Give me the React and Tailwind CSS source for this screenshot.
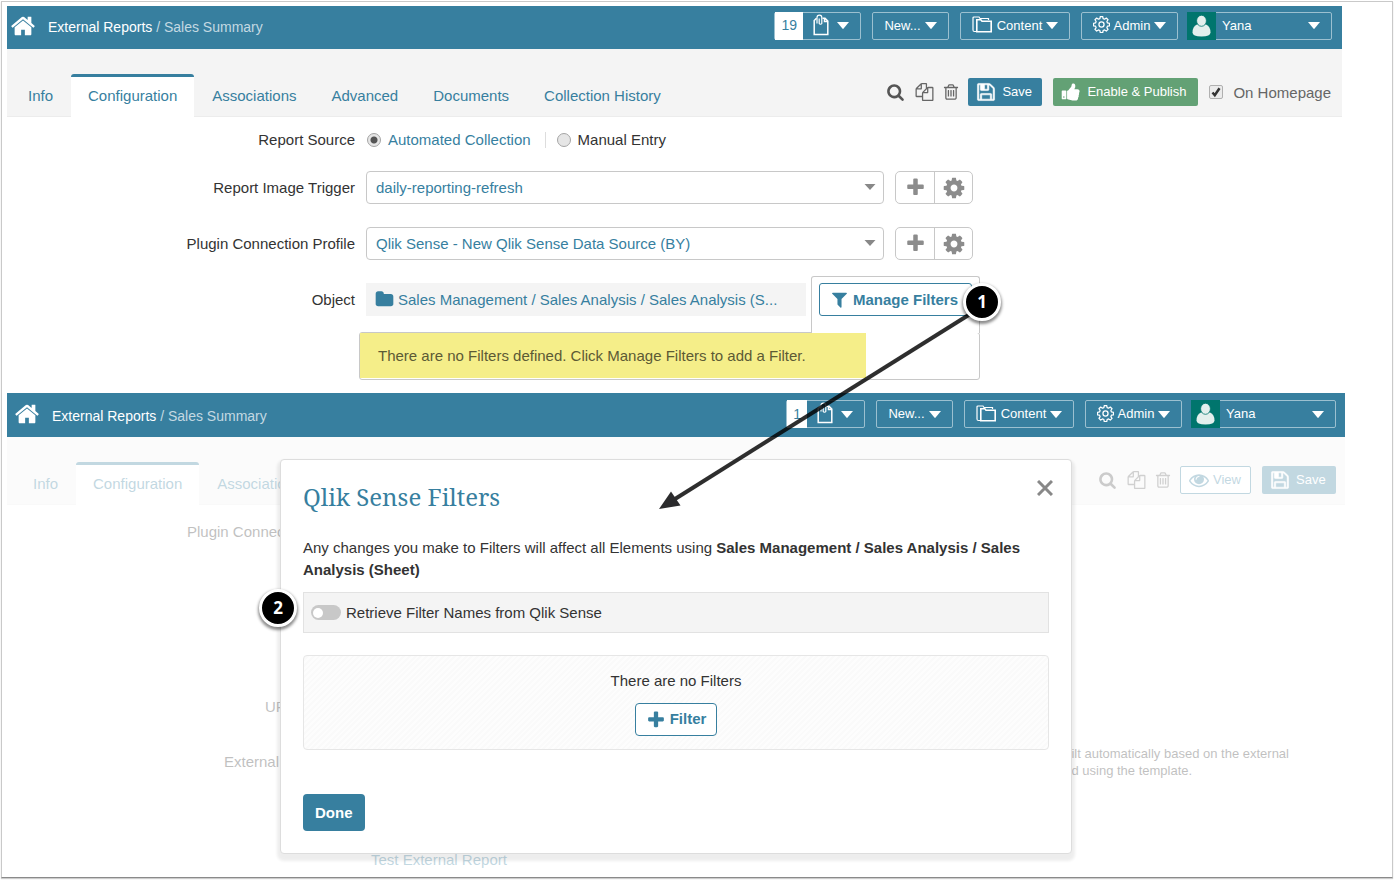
import React, { useState } from 'react'

const PATHS = {
  home: 'M1472 992v480q0 26-19 45t-45 19h-384v-384h-256v384h-384q-26 0-45-19t-19-45v-480q0-1 .5-3t.5-3l575-474 575 474q1 2 1 6zm223-69l-62 74q-8 9-21 11h-3q-13 0-21-7l-692-577-692 577q-12 8-24 7-13-2-21-11l-62-74q-8-10-7-23.5t11-21.5l719-599q32-26 76-26t76 26l244 204v-195q0-14 9-23t23-9h192q14 0 23 9t9 23v408l219 182q10 8 11 21.5t-7 23.5z',
  plus: 'M1600 736v192q0 40-28 68t-68 28h-416v416q0 40-28 68t-68 28h-192q-40 0-68-28t-28-68v-416h-416q-40 0-68-28t-28-68v-192q0-40 28-68t68-28h416v-416q0-40 28-68t68-28h192q40 0 68 28t28 68v416h416q40 0 68 28t28 68z',
  cog: 'M1152 896q0-106-75-181t-181-75-181 75-75 181 75 181 181 75 181-75 75-181zm512-109v222q0 12-8 23t-20 13l-185 28q-19 54-39 91 35 50 107 138 10 12 10 25t-9 23q-27 37-99 108t-94 71q-12 0-26-9l-138-108q-44 23-91 38-16 136-29 186-7 28-36 28h-222q-14 0-24.5-8.5t-11.5-21.5l-28-184q-49-16-90-37l-141 107q-10 9-25 9-14 0-25-11-126-114-165-168-7-10-7-23 0-12 8-23 15-21 51-66.5t54-70.5q-27-50-41-99l-183-27q-13-2-21-12.5t-8-23.5v-222q0-12 8-23t19-13l186-28q14-46 39-92-40-57-107-138-10-12-10-24 0-10 9-23 26-36 98.5-107.5t94.5-71.5q13 0 26 10l138 107q44-23 91-38 16-136 29-186 7-28 36-28h222q14 0 24.5 8.5t11.5 21.5l28 184q49 16 90 37l142-107q9-9 24-9 13 0 25 10 129 119 165 170 7 8 7 22 0 12-8 23-15 21-51 66.5t-54 70.5q26 50 41 98l183 28q13 2 21 12.5t8 23.5z',
  filter: 'M1595 295q17 41-14 70l-493 493v742q0 42-39 59-13 5-25 5-27 0-45-19l-256-256q-19-19-19-45v-486l-493-493q-31-29-14-70 17-39 59-39h1280q42 0 59 39z',
  search: 'M1216 832q0-185-131.5-316.5t-316.5-131.5-316.5 131.5-131.5 316.5 131.5 316.5 316.5 131.5 316.5-131.5 131.5-316.5zm512 832q0 52-38 90t-90 38q-54 0-90-38l-343-342q-179 124-399 124-143 0-273.5-55.5t-225-150-150-225-55.5-273.5 55.5-273.5 150-225 225-150 273.5-55.5 273.5 55.5 225 150 150 225 55.5 273.5q0 220-124 399l343 343q37 37 37 90z',
  save: 'M512 1536h768v-384h-768v384zm896 0h128v-896q0-14-10-38.5t-20-34.5l-281-281q-10-10-34-20t-39-10v416q0 40-28 68t-68 28h-576q-40 0-68-28t-28-68v-416h-128v1280h128v-416q0-40 28-68t68-28h832q40 0 68 28t28 68v416zm-384-928v-320q0-13-9.5-22.5t-22.5-9.5h-192q-13 0-22.5 9.5t-9.5 22.5v320q0 13 9.5 22.5t22.5 9.5h192q13 0 22.5-9.5t9.5-22.5zm640 32v928q0 40-28 68t-68 28h-1344q-40 0-68-28t-28-68v-1344q0-40 28-68t68-28h928q40 0 88 20t76 48l280 280q28 28 48 76t20 88z',
  copy: 'M1696 384q40 0 68 28t28 68v1216q0 40-28 68t-68 28h-960q-40 0-68-28t-28-68v-288h-544q-40 0-68-28t-28-68v-672q0-40 20-88t48-76l408-408q28-28 76-48t88-20h416q40 0 68 28t28 68v328q68-40 128-40h416zm-544 213l-299 299h299v-299zm-640-384l-299 299h299v-299zm196 647l316-316v-416h-384v416q0 40-28 68t-68 28h-416v640h512v-256q0-40 20-88t48-76zm956 804v-1152h-384v416q0 40-28 68t-68 28h-416v640h896z',
  trash: 'M704 736v576q0 14-9 23t-23 9h-64q-14 0-23-9t-9-23v-576q0-14 9-23t23-9h64q14 0 23 9t9 23zm256 0v576q0 14-9 23t-23 9h-64q-14 0-23-9t-9-23v-576q0-14 9-23t23-9h64q14 0 23 9t9 23zm256 0v576q0 14-9 23t-23 9h-64q-14 0-23-9t-9-23v-576q0-14 9-23t23-9h64q14 0 23 9t9 23zm128 724v-948h-896v948q0 22 7 40.5t14.5 27 10.5 8.5h832q3 0 10.5-8.5t14.5-27 7-40.5zm-672-1076h448l-48-117q-7-9-17-11h-317q-10 2-17 11zm928 32v64q0 14-9 23t-23 9h-96v948q0 83-47 143.5t-113 60.5h-832q-66 0-113-58.5t-47-141.5v-952h-96q-14 0-23-9t-9-23v-64q0-14 9-23t23-9h309l70-167q15-37 54-63t79-26h320q40 0 79 26t54 63l70 167h309q14 0 23 9t9 23z',
  folder: 'M1728 608v704q0 92-66 158t-158 66h-1216q-92 0-158-66t-66-158v-960q0-92 66-158t158-66h320q92 0 158 66t66 158v32h672q92 0 158 66t66 158z',
  thumb: 'M320 1344q0-26-19-45t-45-19q-27 0-45.5 19t-18.5 45q0 27 18.5 45.5t45.5 18.5q26 0 45-18.5t19-45.5zm160-512v640q0 26-19 45t-45 19h-288q-26 0-45-19t-19-45v-640q0-26 19-45t45-19h288q26 0 45 19t19 45zm1184 0q0 86-55 149 15 44 15 76 3 76-43 137 17 56 0 117-15 57-54 94 9 112-49 181-64 76-197 78h-129q-66 0-144-15.5t-121.5-29-120.5-39.5q-123-43-158-44-26-1-45-19.5t-19-44.5v-641q0-25 18-43.5t43-20.5q24-2 76-59t101-121q68-87 101-120 18-18 31-48t17.5-48.5 13.5-60.5q7-39 12.5-61t19.5-52 34-50q19-19 45-19 46 0 82.5 10.5t60 26 40 40.5 24 45 12 50 5 45 .5 39q0 38-9.5 76t-19 60-27.5 56q-3 6-10 18t-11 22-8 24h277q78 0 135 57t57 135z',
  eye: 'M1664 960q-152-236-381-353 61 104 61 225 0 185-131.5 316.5t-316.5 131.5-316.5-131.5-131.5-316.5q0-121 61-225-229 117-381 353 133 205 333.5 326.5t434.5 121.5 434.5-121.5 333.5-326.5zm-720-384q0-20-14-34t-34-14q-125 0-214.5 89.5t-89.5 214.5q0 20 14 34t34 14 34-14 14-34q0-86 61-147t147-61q20 0 34-14t14-34zm848 384q0 34-20 69-140 230-376.5 368.5t-499.5 138.5-499.5-139-376.5-368q-20-35-20-69t20-69q140-229 376.5-368t499.5-139 499.5 139 376.5 368q20 35 20 69z',
}

const TABS = ['Info', 'Configuration', 'Associations', 'Advanced', 'Documents', 'Collection History']

function Icon({ name, className }){
  return <svg viewBox="0 0 1792 1792" fill="currentColor" className={`shrink-0 ${className}`} aria-hidden="true"><path d={PATHS[name]} /></svg>
}

function Caret(){
  return <svg viewBox="0 0 12 7" fill="currentColor" className="w-3 h-[7px] shrink-0" aria-hidden="true"><path d="M0 0h12L6.600 6.600q-.6.6-1.200 0z" /></svg>
}

function ClipIcon(){
  return (
    <svg viewBox="0 0 16 22" fill="none" stroke="currentColor" className="w-4 h-[22px] mb-0.5 shrink-0" aria-hidden="true">
      <path d="M3.500 4.200L1.200 6.500v14h13.600V7L12 4.200H9.500M11.500 4.200V7.500h3.300" strokeWidth="1.500" />
      <path d="M4 9.500V3.500a2.400 2.400 0 0 1 4.800 0V9.500a1.500 1.500 0 0 1-2.600 0V4.500" strokeWidth="1.200" />
    </svg>
  )
}

function ContentIcon(){
  return (
    <svg viewBox="0 0 21 17" fill="none" stroke="currentColor" className="w-[21px] h-[17px] mb-0.5 shrink-0" aria-hidden="true">
      <path d="M4 15.500H2.500q-1.500 0-1.500-1.500V2q0-1 1-1h5l1 1.500h8.500V4" strokeWidth="1.200" />
      <path d="M4.800 3.800h4l1.200 1.400h9.200v10.500H4.800z" strokeWidth="1.600" />
    </svg>
  )
}

function GearIcon(){
  return (
    <svg viewBox="0 0 24 24" fill="none" stroke="currentColor" strokeWidth="1.800" strokeLinejoin="round" className="w-[17px] h-[17px] mb-0.5 shrink-0" aria-hidden="true">
      <path d="M10.300 1.500h3.400l.6 2.900 2 .8 2.500-1.600 2.400 2.400-1.600 2.500.8 2 2.900.6v3.400l-2.900.6-.8 2 1.600 2.500-2.400 2.400-2.500-1.600-2 .8-.6 2.900h-3.400l-.6-2.900-2-.8-2.500 1.600-2.400-2.400 1.600-2.500-.8-2-2.900-.6v-3.400l2.900-.6.8-2-1.600-2.500 2.400-2.400 2.500 1.600 2-.8z" transform="translate(0 -.7)" />
      <circle cx="12" cy="12" r="3.600" />
    </svg>
  )
}

function UserIcon(){
  return (
    <svg viewBox="0 0 29 28" className="w-[29px] h-7 shrink-0 bg-[#00756d]" aria-hidden="true">
      <path d="M5.500 20.500q0-6 4.500-8h9q4.500 2 4.500 8 0 4-9 4t-9-4z" fill="#e3efed" />
      <ellipse cx="14.500" cy="8.800" rx="4.900" ry="5.500" fill="#e3efed" stroke="#00756d" strokeWidth=".8" />
    </svg>
  )
}

const barButton = 'flex items-center h-7 border border-[#9bc0d0] rounded-xs text-[13px] text-white'

function TopBar({ count, className }){
  return (
    <header className={`flex items-center justify-between bg-[#377f9f] text-white ${className}`}>
      <nav className="flex items-center text-[14px]">
        <a href="#home" aria-label="Home" className="mr-3"><Icon name="home" className="w-[26px] h-[26px]" /></a>
        <a href="#reports" className="mt-1">External Reports</a>
        <span className="mt-1 text-[#c3d9e2] whitespace-pre"> / Sales Summary</span>
      </nav>
      <div className="flex items-center">
        <button className={`${barButton} mr-[11px] pr-[11px]`}>
          <span className="flex items-center h-7 px-1.5 mr-2.5 bg-white text-[#377f9f] text-[14px]">{count}</span>
          <ClipIcon />
          <span className="ml-2"><Caret /></span>
        </button>
        <button className={`${barButton} w-[77px] justify-center gap-1 mr-[11px]`}>New... <Caret /></button>
        <button className={`${barButton} w-[110px] justify-center gap-1 mr-[11px]`}><ContentIcon />Content <Caret /></button>
        <button className={`${barButton} w-[97px] justify-center gap-1 mr-[9px]`}><GearIcon />Admin <Caret /></button>
        <button className={`${barButton} w-[145px] justify-between pr-[11px]`}>
          <span className="flex items-center gap-1.5 -ml-px"><UserIcon />Yana</span>
          <Caret />
        </button>
      </div>
    </header>
  )
}

function TabBar({ tabs, className, children }){
  return (
    <div className={`flex items-end justify-between h-[68px] bg-[#f4f4f4] border-b border-[#ececec] ${className}`}>
      <nav className="flex gap-px -mb-px">
        {tabs.map(t => (
          <a key={t} href="#tab" className={`flex items-center h-[43px] px-[17px] pb-0.5 text-[15px] text-[#377f9f] border-t-[3px] ${t === 'Configuration' ? 'bg-white border-[#377f9f] rounded-t-[3px]' : 'border-transparent'}`}>{t}</a>
        ))}
      </nav>
      <div className="flex items-center self-center mt-[18px]">
        <button aria-label="Search" className="mr-2.5 text-[#555]"><Icon name="search" className="w-[19px] h-[18px]" /></button>
        <button aria-label="Copy" className="mr-2 text-[#666]"><Icon name="copy" className="w-[19px] h-[18px]" /></button>
        <button aria-label="Delete" className="mr-2 text-[#666]"><Icon name="trash" className="w-[18px] h-[18px]" /></button>
        {children}
      </div>
    </div>
  )
}

function SaveButton(){
  return <button className="flex items-center gap-1.5 h-7 w-[74px] pl-2 rounded-xs bg-[#377f9f] text-white text-[13px]"><Icon name="save" className="w-5 h-5 stroke-white stroke-[50px]" />Save</button>
}

function SelectRow({ id, label, value }){
  return (
    <div className="flex items-center">
      <label htmlFor={id} className="w-[348px] mr-[11px] pt-0.5 text-right">{label}</label>
      <div className="relative w-[518px] mr-[11px]">
        <select id={id} defaultValue={value} className="appearance-none w-full h-[33px] pl-[9px] pt-0.5 border border-[#c8c8c8] rounded-[4px] bg-white text-[#377f9f] text-[15px]">
          <option>{value}</option>
        </select>
        <svg viewBox="0 0 12 6" fill="#888" className="absolute right-2 top-[13px] w-3 h-1.5 pointer-events-none" aria-hidden="true"><path d="M.5 0h11L6 6z" /></svg>
      </div>
      <div className="flex h-[33px] w-[78px] border border-[#c8c8c8] rounded-[5px] text-[#8c8c8c]">
        <button aria-label={`Add ${label}`} className="w-[39px] flex items-center justify-center border-r border-[#c8c8c8]"><Icon name="plus" className="w-[21px] h-[21px]" /></button>
        <button aria-label={`Configure ${label}`} className="flex-1 flex items-center justify-center"><Icon name="cog" className="w-6 h-6" /></button>
      </div>
    </div>
  )
}

const radio = 'appearance-none w-3.5 h-3.5 rounded-full border border-[#a5a5a5] bg-[#e6e6e6] checked:bg-[radial-gradient(circle,#555_3px,#e6e6e6_4px)]'

function ConfigPage(){
  const [source, setSource] = useState('auto')
  const [onHome, setOnHome] = useState(true)
  return (
    <section className="mr-[50px]">
      <TopBar count="19" className="h-[43px] pl-[3px] pr-2.5 pb-1" />
      <TabBar tabs={TABS} className="pl-1 pr-[11px]">
        <SaveButton />
        <button className="flex items-center gap-1.5 h-7 w-[145px] pl-2 ml-[11px] rounded-xs bg-[#63a175] text-white text-[13px]"><Icon name="thumb" className="w-5 h-5" />Enable &amp; Publish</button>
        <span className="relative flex ml-[11px] mr-2.5 w-3.5 h-3.5">
          <input id="homepage" type="checkbox" checked={onHome} onChange={e => setOnHome(e.target.checked)} className="peer appearance-none w-3.5 h-3.5 border border-[#b0b0b0] rounded-[2px] bg-[#ebebeb]" />
          <svg viewBox="0 0 14 14" fill="none" stroke="#333" strokeWidth="2.500" className="absolute inset-0 hidden peer-checked:block pointer-events-none"><path d="M3.500 7.500l2.300 2.700 4.700-7" /></svg>
        </span>
        <label htmlFor="homepage" className="pt-1 text-[15px] text-[#666]">On Homepage</label>
      </TabBar>

      <div className="text-[15px] text-[#333] pb-[13px]">
        <div className="flex items-center h-[46px] mb-2">
          <span className="w-[348px] mr-3 text-right">Report Source</span>
          <input id="auto" type="radio" name="source" checked={source === 'auto'} onChange={() => setSource('auto')} className={radio} />
          <label htmlFor="auto" className="ml-[7px] mr-3.5 text-[#377f9f]">Automated Collection</label>
          <span className="w-px h-4 bg-[#ddd] mr-[11px]" />
          <input id="manual" type="radio" name="source" checked={source === 'manual'} onChange={() => setSource('manual')} className={radio} />
          <label htmlFor="manual" className="ml-[7px]">Manual Entry</label>
        </div>
        <div className="flex flex-col gap-[23px]">
          <SelectRow id="trigger" label="Report Image Trigger" value="daily-reporting-refresh" />
          <SelectRow id="profile" label="Plugin Connection Profile" value="Qlik Sense - New Qlik Sense Data Source (BY)" />
        </div>
        <div className="flex items-start mt-4">
          <span className="w-[348px] mr-[11px] mt-[7px] leading-[33px] text-right">Object</span>
          <a href="#object" className="flex items-center w-[440px] h-[33px] mt-[7px] mr-[5px] pl-[9px] bg-[#f4f4f4] text-[#377f9f]">
            <Icon name="folder" className="w-[19px] h-[19px] mr-1" />
            <span className="pt-0.5 whitespace-nowrap">Sales Management / Sales Analysis / Sales Analysis (S...</span>
          </a>
          <div className="relative w-[169px] -mb-px pt-1.5 pb-[17px] px-[7px] bg-white border border-b-0 border-[#c8c8c8] rounded-t-[3px]">
            <button className="flex items-center gap-1 w-full h-[33px] pl-2.5 border border-[#377f9f] rounded-[3px] text-[#377f9f] font-bold"><Icon name="filter" className="w-[19px] h-[19px]" /><span className="pt-0.5">Manage Filters</span></button>
          </div>
        </div>
        <div className="w-[621px] ml-[352px] pb-px border border-[#c8c8c8] rounded-[3px]">
          <p className="w-[506px] h-[45px] pl-[18px] leading-[45px] bg-[#f5ee89] text-[#5c5a35]">There are no Filters defined. Click Manage Filters to add a Filter.</p>
        </div>
      </div>
    </section>
  )
}

function FilterDialog(){
  const [retrieve, setRetrieve] = useState(false)
  return (
    <div role="dialog" aria-labelledby="dlg-title" className="absolute left-[273px] top-[66px] w-[792px] px-[22px] pt-[18px] pb-[22px] bg-white border border-[#ddd] rounded-[4px] shadow-[0_4px_3px_3px_rgba(0,0,0,0.07)] text-[15px] text-[#333]">
      <div className="flex items-start justify-between">
        <h2 id="dlg-title" className="font-['Noto_Serif','DejaVu_Serif',serif] text-[24px] leading-[38px] text-[#377f9f]">Qlik Sense Filters</h2>
        <button aria-label="Close" className="-mr-1.5 p-0.5 text-[#888]">
          <svg viewBox="0 0 16 16" stroke="currentColor" strokeWidth="3" className="w-4 h-4"><path d="M1 1l14 14M15 1L1 15" /></svg>
        </button>
      </div>
      <p className="mt-[21px] leading-[22px]">Any changes you make to Filters will affect all Elements using <b>Sales Management / Sales Analysis / Sales Analysis (Sheet)</b></p>
      <div className="flex items-center h-[41px] mt-[11px] px-[7px] bg-[#f4f4f4] border border-[#e2e2e2]">
        <span className="relative flex mr-[5px]">
          <input id="retrieve" type="checkbox" role="switch" checked={retrieve} onChange={e => setRetrieve(e.target.checked)} className="peer appearance-none w-[30px] h-[15px] rounded-full bg-[#c8c8c8] checked:bg-[#377f9f]" />
          <span className="absolute left-[2px] top-[3px] w-[10px] h-[10px] rounded-full bg-white pointer-events-none peer-checked:left-[18px]" />
        </span>
        <label htmlFor="retrieve" className="pt-0.5">Retrieve Filter Names from Qlik Sense</label>
      </div>
      <div className="flex flex-col items-center mt-[22px] pt-[14px] pb-[13px] border border-[#e6e6e6] rounded-[4px] bg-[repeating-linear-gradient(135deg,#fdfdfd_0_2px,#fafafa_2px_4px)]">
        <p className="leading-[22px] mb-[11px]">There are no Filters</p>
        <button className="flex items-center gap-1 h-[33px] px-2.5 bg-white border border-[#377f9f] rounded-[4px] text-[#377f9f] font-bold"><Icon name="plus" className="w-5 h-5" />Filter</button>
      </div>
      <button className="h-[37px] mt-11 px-3 pt-0.5 bg-[#377f9f] rounded-[4px] text-white font-bold">Done</button>
    </div>
  )
}

function DialogPage(){
  return (
    <section className="relative">
      <div className="mr-[47px]">
        <TopBar count="1" className="h-11 pl-[7px] pr-[9px] pb-0.5" />
        <div className="opacity-30">
          <TabBar tabs={TABS.slice(0, 3)} className="pl-[9px] pr-[9px]">
            <button className="flex items-center gap-1 h-7 w-[71px] pl-2 mr-[11px] border border-[#377f9f] rounded-xs bg-white text-[#377f9f] text-[13px]"><Icon name="eye" className="w-5 h-5" />View</button>
            <SaveButton />
          </TabBar>
        </div>
      </div>
      <div className="h-[372px] pt-4 text-[15px] leading-[22px] text-[#333]">
        <div className="opacity-30">
          <p className="pl-[180px] mb-[153px]">Plugin Connection</p>
          <p className="pl-[258px] mb-[27px]">URL</p>
          <div className="flex items-start h-[104px]">
            <p className="w-[832px] pl-[217px] mt-1.5">External</p>
            <p className="ml-[218px] text-[13px] leading-[17px]">built automatically based on the external<br />and using the template.</p>
          </div>
          <p className="pl-[364px] text-[#377f9f]">Test External Report</p>
        </div>
      </div>
      <FilterDialog />
    </section>
  )
}

function Step({ n, className }){
  return <span className={`absolute flex items-center justify-center w-[38px] h-[38px] rounded-full border-[3px] border-white bg-black text-white font-['Noto_Sans','Open_Sans',sans-serif] text-[17px] font-bold shadow-[0_2px_3px_1px_rgba(0,0,0,0.45)] ${className}`}>{n}</span>
}

export default function App(){
  return (
    <div className="p-px pr-0.5 pb-0.5 bg-white font-['Liberation_Sans',Arial,sans-serif]">
      <main className="relative pt-1 pl-[5px] border border-[#c9c9c9] border-b-[#8a8a8a] shadow-[0_1px_1px_rgba(0,0,0,0.2)]">
        <ConfigPage />
        <DialogPage />
        <svg viewBox="0 0 360 220" className="absolute left-[638px] top-[298px] w-[360px] h-[220px] pointer-events-none" aria-hidden="true">
          <path d="M335 11L35 199" stroke="#000" strokeOpacity=".82" strokeWidth="4" />
          <path d="M19 209l12-17.500 9.500 14z" fill="#2b2b2d" />
        </svg>
        <Step n="1" className="left-[961px] top-[281px]" />
        <Step n="2" className="left-[257px] top-[587px]" />
      </main>
    </div>
  )
}
